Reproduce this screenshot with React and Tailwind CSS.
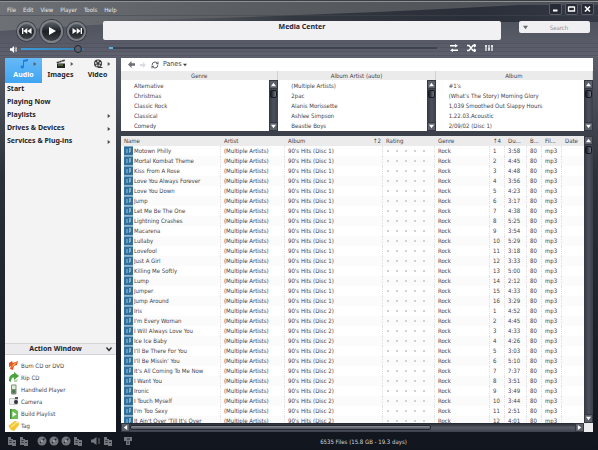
import React from 'react';
import { RefreshCw } from 'lucide-react';

const TRACKS = [
  ['Motown Philly', 1, 1, '3:58'],
  ['Mortal Kombat Theme', 1, 2, '4:45'],
  ['Kiss From A Rose', 1, 3, '4:48'],
  ['Love You Always Forever', 1, 4, '3:56'],
  ['Love You Down', 1, 5, '4:23'],
  ['Jump', 1, 6, '3:17'],
  ['Let Me Be The One', 1, 7, '4:38'],
  ['Lightning Crashes', 1, 8, '5:25'],
  ['Macarena', 1, 9, '3:54'],
  ['Lullaby', 1, 10, '5:29'],
  ['Lovefool', 1, 11, '3:18'],
  ['Just A Girl', 1, 12, '3:33'],
  ['Killing Me Softly', 1, 13, '5:00'],
  ['Lump', 1, 14, '2:12'],
  ['Jumper', 1, 15, '4:33'],
  ['Jump Around', 1, 16, '3:29'],
  ['Iris', 2, 1, '4:52'],
  ["I'm Every Woman", 2, 2, '4:45'],
  ['I Will Always Love You', 2, 3, '4:33'],
  ['Ice Ice Baby', 2, 4, '4:26'],
  ["I'll Be There For You", 2, 5, '3:03'],
  ["I'll Be Missin' You", 2, 6, '5:10'],
  ["It's All Coming To Me Now", 2, 7, '7:37'],
  ['I Want You', 2, 8, '3:51'],
  ['Ironic', 2, 9, '3:49'],
  ['I Touch Myself', 2, 10, '3:44'],
  ["I'm Too Sexy", 2, 11, '2:51'],
  ["It Ain't Over 'Till It's Over", 2, 12, '4:01'],
];

const PANES = [
  { title: 'Genre', items: ['Alternative', 'Christmas', 'Classic Rock', 'Classical', 'Comedy'] },
  { title: 'Album Artist (auto)', items: ['(Multiple Artists)', '2pac', 'Alanis Morissette', 'Ashlee Simpson', 'Beastie Boys'] },
  { title: 'Album', items: ["#1's", "(What's The Story) Morning Glory", '1,039 Smoothed Out Slappy Hours', '1.22.03.Acoustic', '2/09/02 (Disc 1)'] },
];

const RATING = [0, 1, 2, 3, 4];

function Triangle({ points, className }) {
  return (
    <svg viewBox="0 0 6 6" className={className} fill="currentColor" aria-hidden="true">
      <polygon points={points} />
    </svg>
  );
}

function ScrollButton({ points, label }) {
  return (
    <button aria-label={label} className="flex size-[9px] shrink-0 items-center justify-center border border-[#343842] bg-[#5c606b] text-white">
      <Triangle points={points} className="size-[5px]" />
    </button>
  );
}

function VerticalScrollbar() {
  return (
    <div className="flex w-[9px] shrink-0 flex-col items-center bg-linear-to-r from-[#333842] via-[#4b505c] to-[#3a3f4b]">
      <ScrollButton points="0,5 3,1 6,5" label="Scroll up" />
      <div className="mt-px h-2 w-[7px] rounded-xs border border-[#14181f] bg-linear-to-r from-[#1a1d25] to-[#757985]" />
      <div className="flex-1" />
      <ScrollButton points="0,1 3,5 6,1" label="Scroll down" />
    </div>
  );
}

function RoundButton({ label, big, children }) {
  return (
    <button
      aria-label={label}
      className={
        (big ? 'size-[23px]' : 'size-[19px]') +
        ' flex shrink-0 items-center justify-center rounded-full border-2 border-[#7d8187] bg-linear-to-b from-[#5d6269] via-[#1c2025] to-[#3e4348] text-white shadow-[0_0_0_1px_#3c4048]'
      }
    >
      {children}
    </button>
  );
}

function WindowButton({ label, children }) {
  return (
    <button aria-label={label} className="flex h-3 w-[13px] items-center justify-center rounded-xs border border-[#5a5e68] bg-[#262a34] text-white">
      <svg viewBox="0 0 9 8" className="h-2 w-[9px]" fill="none" stroke="currentColor" aria-hidden="true">
        {children}
      </svg>
    </button>
  );
}

function Header() {
  return (
    <header className="relative h-[57px] shrink-0 overflow-hidden bg-linear-to-b from-[#62676b] via-[#5d616a] to-[#5b5e6a] text-white">
      <svg viewBox="0 0 598 57" preserveAspectRatio="none" className="absolute inset-0 h-full w-full" aria-hidden="true">
        <defs>
          <linearGradient id="top" x1="0" x2="1" y1="0" y2="0">
            <stop offset="0" stopColor="#6d7176" />
            <stop offset="0.4" stopColor="#5a5e62" />
            <stop offset="1" stopColor="#4b4f55" />
          </linearGradient>
          <linearGradient id="dark" x1="0" x2="1" y1="0" y2="0">
            <stop offset="0" stopColor="#4a4e55" stopOpacity="0" />
            <stop offset="0.4" stopColor="#343840" />
            <stop offset="0.75" stopColor="#2a2e38" />
            <stop offset="1" stopColor="#343945" />
          </linearGradient>
          <linearGradient id="low" x1="0" x2="0" y1="0" y2="1">
            <stop offset="0" stopColor="#4f535c" />
            <stop offset="1" stopColor="#5e616e" />
          </linearGradient>
        </defs>
        <rect width="598" height="57" fill="url(#top)" />
        <path d="M0 31 C70 26 150 21 250 20 H598 V57 H0Z" fill="url(#low)" />
        <path d="M90 20 C240 19 380 12 520 5 H598 V22 H90Z" fill="url(#dark)" />
        <rect y="15" width="598" height="1" fill="#444850" opacity="0.5" />
        <rect width="598" height="1" fill="#3a3e42" />
        <rect y="1" width="598" height="1" fill="#8d9193" />
        <path d="M0 43.5 H598 M0 47.5 H598 M0 51.5 H598 M0 55.5 H598" stroke="#50535f" opacity="0.7" />
      </svg>
      <div className="relative flex h-full flex-col">
        <div className="flex h-[17px] shrink-0 items-center justify-between pt-px pl-[7px] pr-1">
          <nav aria-label="Menu" className="flex gap-[7px] text-[6px] text-[#e6e7e9]">
            <button>File</button>
            <button>Edit</button>
            <button>View</button>
            <button>Player</button>
            <button>Tools</button>
            <button>Help</button>
          </nav>
          <div className="flex gap-[3px]">
            <WindowButton label="Minimize"><path d="M2 5.5h4.500" strokeWidth="2" /></WindowButton>
            <WindowButton label="Maximize"><path d="M1.500 2h6M1.500 1.500v4.500h6v-4.500" strokeWidth="1.300" /></WindowButton>
            <WindowButton label="Close"><path d="M2 1.500l5 5M7 1.500l-5 5" strokeWidth="1.600" /></WindowButton>
          </div>
        </div>
        <div className="flex min-h-0 flex-1 pr-2">
          <div className="flex w-[103px] shrink-0 flex-col">
            <div className="flex h-7 items-center gap-1 pl-[17px]">
              <RoundButton label="Previous">
                <svg viewBox="0 0 12 8" className="h-2 w-3" fill="currentColor" aria-hidden="true"><path d="M1 1h1.300v6H1zM2.300 4l4-3v6zM6.300 4l4.200-3v6z" /></svg>
              </RoundButton>
              <RoundButton label="Play" big>
                <svg viewBox="0 0 10 10" className="size-[10px]" fill="currentColor" aria-hidden="true"><path d="M2 1l7 4-7 4z" /></svg>
              </RoundButton>
              <RoundButton label="Next">
                <svg viewBox="0 0 12 8" className="h-2 w-3" fill="currentColor" aria-hidden="true"><path d="M1.500 1l4.200 3-4.200 3zM5.700 1l4 3-4 3zM9.700 1H11v6H9.700z" /></svg>
              </RoundButton>
            </div>
            <div className="flex items-center gap-1 pl-[10px]">
              <svg viewBox="0 0 8 8" className="size-[7px] shrink-0" fill="currentColor" aria-hidden="true"><path d="M0 2.500h2L4.500 0v8L2 5.500H0z" /><path d="M5.500 2q1.500 2 0 4M6.700 1q2 3 0 6" fill="none" stroke="currentColor" strokeWidth="0.800" /></svg>
              <input
                type="range"
                aria-label="Volume"
                defaultValue="96"
                className="h-2 w-[63px] appearance-none bg-transparent bg-linear-to-r from-[#3f9ad6] to-[#357fb0] bg-[length:100%_2px] bg-center bg-no-repeat [&::-webkit-slider-thumb]:size-2 [&::-webkit-slider-thumb]:appearance-none [&::-webkit-slider-thumb]:rounded-full [&::-webkit-slider-thumb]:border [&::-webkit-slider-thumb]:border-[#22262d] [&::-webkit-slider-thumb]:bg-[#5a6069]"
              />
            </div>
          </div>
          <div className="flex min-w-0 flex-1 flex-col pt-1">
            <div className="h-[19px] rounded-xs bg-[#f1f1f3] pt-px text-center font-['Noto_Sans',sans-serif] text-[7px] leading-[10px] font-bold text-[#1f2433]">Media Center</div>
            <div className="flex items-center gap-[9px] pt-1 pr-2 pl-[6px]">
              <input
                type="range"
                aria-label="Position"
                defaultValue="0"
                className="mr-1 h-2 min-w-0 flex-1 appearance-none bg-transparent bg-linear-to-r from-[#3f4350] to-[#3f4350] bg-[length:100%_2px] bg-center bg-no-repeat [&::-webkit-slider-thumb]:h-[2px] [&::-webkit-slider-thumb]:w-1 [&::-webkit-slider-thumb]:appearance-none [&::-webkit-slider-thumb]:bg-[#58b4ee]"
              />
              <button aria-label="Repeat">
                <svg viewBox="0 0 8 8" className="size-2" fill="currentColor" aria-hidden="true"><path d="M0 1h5V0l3 1.700L5 3.400V2.400H0zM8 5.600H3V4.600L0 6.300 3 8V7h5z" /></svg>
              </button>
              <button aria-label="Shuffle">
                <svg viewBox="0 0 9 8" className="h-2 w-[9px]" fill="none" stroke="currentColor" strokeWidth="1.300" aria-hidden="true"><path d="M0 1.500h2l4 5h3M0 6.500h2l4-5h3M7 0l1.800 1.500L7 3M7 5l1.800 1.500L7 8" /></svg>
              </button>
              <button aria-label="Equalizer">
                <svg viewBox="0 0 8 8" className="size-2" stroke="currentColor" strokeWidth="1.200" aria-hidden="true"><path d="M1 1v6M4 1v6M7 1v6" /><path d="M0 2h2M3 5h2M6 2h2" /></svg>
              </button>
            </div>
          </div>
          <div className="w-[89px] shrink-0 pt-1 pl-[18px]">
            <div className="flex h-3 items-center rounded-xs bg-[#f0f0f2]">
              <button aria-label="Search options" className="px-1 text-[#666a70]"><Triangle points="0,1 6,1 3,5" className="size-[5px]" /></button>
              <input type="text" aria-label="Search" placeholder="Search" className="h-full min-w-0 flex-1 bg-transparent pr-1 text-center text-[6px] text-[#333] outline-none placeholder:text-[#8d8f94]" />
            </div>
          </div>
        </div>
      </div>
    </header>
  );
}

function AudioIcon() {
  return (
    <svg viewBox="0 0 10 10" className="size-[10px]" fill="#1c7fe0" aria-hidden="true">
      <path d="M4 1l5-1v2L5 3v5H4z" /><ellipse cx="3.300" cy="8" rx="1.800" ry="1.400" />
    </svg>
  );
}

function ClapperIcon() {
  return (
    <svg viewBox="0 0 10 10" className="size-[10px]" aria-hidden="true">
      <path d="M1 4.500h8v4.500H1z" fill="#23251f" /><path d="M0.500 3L8.500 0.500l0.500 1.500L1 4.500z" fill="#3c3f38" /><path d="M2.500 2.500l1.500 1M5 1.700l1.500 1" stroke="#ddd" strokeWidth="0.700" /><path d="M2 6h5" stroke="#789a5b" />
    </svg>
  );
}

function ReelIcon() {
  return (
    <svg viewBox="0 0 10 10" className="size-[10px]" aria-hidden="true">
      <circle cx="5" cy="4.500" r="4" fill="#3b3b3d" /><path d="M5 8.500h4.500" stroke="#3b3b3d" />
      <g fill="#c9c9cb"><circle cx="5" cy="2.200" r="1" /><circle cx="7.200" cy="4" r="1" /><circle cx="2.800" cy="4" r="1" /><circle cx="3.700" cy="6.600" r="1" /><circle cx="6.300" cy="6.600" r="1" /></g>
    </svg>
  );
}

const TABS = [
  { label: 'Audio', icon: <AudioIcon />, active: true },
  { label: 'Images', icon: <ClapperIcon /> },
  { label: 'Video', icon: <ReelIcon /> },
];

const TREE = [
  { label: 'Start' },
  { label: 'Playing Now' },
  { label: 'Playlists', more: true },
  { label: 'Drives & Devices', more: true },
  { label: 'Services & Plug-ins', more: true },
];

const ACTIONS = [
  {
    label: 'Burn CD or DVD',
    art: <><path d="M1 3l3-2 1 2 5-2-1 4-3 1-1 4-3-1 1-3-2 1z" fill="#e4572a" /><path d="M3 8l2-4 4-2-2 3z" fill="#f9a13a" /></>,
  },
  {
    label: 'Rip CD',
    art: <><path d="M1 9c0-5 2-7 5-7V0l5 4-5 4V5.500C4 5 3 7 3 10z" fill="#4aa53c" /><path d="M6 8l4-1-1 3H6z" fill="#bcd7b4" /></>,
  },
  {
    label: 'Handheld Player',
    art: <><rect x="3" y="0.500" width="5.500" height="10" rx="1" fill="#7d8a7d" /><rect x="4" y="1.500" width="3.500" height="3.500" fill="#d8f0d4" /><circle cx="5.700" cy="7.500" r="1.500" fill="#3c7a40" /></>,
  },
  {
    label: 'Camera',
    art: <><rect x="1" y="2" width="9" height="7" rx="1" fill="#c6c8cc" /><path d="M2 3h4v5H2z" fill="#eef0f2" /><circle cx="8" cy="6" r="2" fill="#33363c" /><path d="M7 1h3v2H7z" fill="#50545c" /></>,
  },
  {
    label: 'Build Playlist',
    art: <><path d="M2 1h5l3 2v8H2z" fill="#6cbf4e" /><path d="M4.500 3.500l4 2.700-4 2.800z" fill="#fff" /><path d="M2 1h1.500v10H2z" fill="#3f8f38" /></>,
  },
  {
    label: 'Tag',
    art: <><path d="M0.500 6l6-5 4 1 0.500 3-5 6-3-1z" fill="#f3c52e" /><path d="M3 7l5-4" stroke="#fbe68e" strokeWidth="1.500" /><circle cx="9" cy="2.500" r="0.800" fill="#fff" /></>,
  },
];

function Sidebar() {
  return (
    <aside className="flex w-[111px] shrink-0 flex-col bg-[#f3f3f4] text-[#23252b]">
      <div className="flex h-[25px] shrink-0 font-['Noto_Sans',sans-serif]">
        {TABS.map((tab) => (
          <button
            key={tab.label}
            className={
              (tab.active ? 'bg-linear-to-b from-[#66b9f6] to-[#3fa5f2] text-white' : '') +
              ' relative flex flex-1 flex-col items-center pt-px text-[7px] leading-[11px] font-bold'
            }
          >
            {tab.icon}
            <span>{tab.label}</span>
            <Triangle points="1,0 5,3 1,6" className="absolute top-1 right-[5px] size-1 text-[#55585f]" />
          </button>
        ))}
      </div>
      <nav className="flex-1 font-['Noto_Sans',sans-serif]" aria-label="Library">
        {TREE.map((item) => (
          <button key={item.label} className="flex h-[13px] w-full items-center justify-between pr-[5px] pl-[2px] text-[7px] font-bold">
            {item.label}
            {item.more && <Triangle points="1,0 5,3 1,6" className="size-1 text-[#44474e]" />}
          </button>
        ))}
      </nav>
      <button className="flex h-3 shrink-0 items-center border-y border-[#d4d4d6] bg-[#ececee] pr-1 font-['Noto_Sans',sans-serif] text-[7px] font-bold">
        <span className="flex-1 text-center">Action Window</span>
        <svg viewBox="0 0 6 6" className="size-[6px]" fill="none" stroke="currentColor" strokeWidth="1.300" aria-hidden="true"><path d="M0.500 1.500L3 4.500l2.500-3" /></svg>
      </button>
      <div className="h-[77px] shrink-0 bg-white pt-1">
        {ACTIONS.map((action) => (
          <button key={action.label} className="flex h-3 w-full items-center gap-[2px] pl-[3px] text-[6px] text-[#3f4147]">
            <svg viewBox="0 0 11 11" className="size-[11px] shrink-0" aria-hidden="true">{action.art}</svg>
            {action.label}
          </button>
        ))}
      </div>
    </aside>
  );
}

function Browser() {
  return (
    <section className="shrink-0 bg-white text-[#3f4147]">
      <div className="flex h-[13px] items-center pl-[7px] text-[7px]">
        <svg viewBox="0 0 8 8" className="size-[7px] text-[#6b6e74]" fill="currentColor" aria-hidden="true"><path d="M0 4l4-4v2.500h4v3H4V8z" /></svg>
        <svg viewBox="0 0 8 8" className="mx-[5px] size-[6px] text-[#dcdde0]" fill="currentColor" aria-hidden="true"><path d="M8 4L4 0v2.500H0v3h4V8z" /></svg>
        <RefreshCw className="mr-1 size-2 text-[#5f636b]" strokeWidth={3} />
        <button className="flex items-center gap-px">Panes<Triangle points="0,1 6,1 3,5" className="size-1" /></button>
      </div>
      <div className="grid grid-cols-3">
        {PANES.map((pane) => (
          <div key={pane.title} className="min-w-0">
            <div className="h-[9px] border-r border-[#d0d1d3] bg-[#ebebec] text-center text-[6px] leading-[9px]">{pane.title}</div>
            <div className="flex h-[51px]">
              <ul className="min-w-0 flex-1 pt-px pl-[13px] text-[6px] leading-[10px] whitespace-nowrap">
                {pane.items.map((item) => <li key={item}>{item}</li>)}
              </ul>
              <VerticalScrollbar />
            </div>
          </div>
        ))}
      </div>
    </section>
  );
}

function TrackTable() {
  const cell = 'h-[10px] p-0 pl-[3px] border-r border-dotted border-[#e2e2e4]';
  const head = 'h-[10px] p-0 pl-[3px] text-left font-normal';
  return (
    <section className="flex min-h-0 flex-1 flex-col bg-white">
      <div className="flex min-h-0 flex-1">
        <div className="min-w-0 flex-1 overflow-hidden">
          <table className="w-full table-fixed border-separate border-spacing-0 text-[6px] leading-[10px] whitespace-nowrap text-[#3f4147]">
            <colgroup>
              <col className="w-[100px]" />
              <col className="w-16" />
              <col className="w-[98px]" />
              <col className="w-[52px]" />
              <col className="w-[55px]" />
              <col className="w-[15px]" />
              <col className="w-[22px]" />
              <col className="w-[15px]" />
              <col className="w-5" />
              <col />
            </colgroup>
            <thead className="bg-[#ebebec]">
              <tr>
                <th className={head}>Name</th>
                <th className={head}>Artist</th>
                <th className={head}><span className="flex justify-between pr-[2px]"><span>Album</span><span>↑2</span></span></th>
                <th className={head}>Rating</th>
                <th className={head}>Genre</th>
                <th className={head}>↑4</th>
                <th className={head}>Du...</th>
                <th className={head}>B...</th>
                <th className={head}>Fil...</th>
                <th className={head}>Date</th>
              </tr>
            </thead>
            <tbody>
              {TRACKS.map(([name, disc, number, duration]) => (
                <tr key={name} className="even:bg-[#fbfbfb]">
                  <td className={cell}>
                    <span className="flex h-[10px] items-center gap-px">
                      <svg viewBox="0 0 9 10" className="h-[10px] w-[9px] shrink-0" aria-hidden="true">
                        <rect width="9" height="9.500" fill="#2f6f9a" />
                        <path d="M0 0h9v1H0z" fill="#79a9c6" />
                        <path d="M2 3h2v4H2z" fill="#5f9dc2" />
                        <path d="M6 2v4M5 6h1" stroke="#b9d6e6" strokeWidth="1.200" />
                      </svg>
                      {name}
                    </span>
                  </td>
                  <td className={cell}>(Multiple Artists)</td>
                  <td className={cell}>90's Hits (Disc {disc})</td>
                  <td className={cell}>
                    <span className="flex gap-[7px] pl-px">
                      {RATING.map((star) => <i key={star} className="size-[2px] rounded-full bg-[#c3c4c7]" />)}
                    </span>
                  </td>
                  <td className={cell}>Rock</td>
                  <td className={cell}>{number}</td>
                  <td className={cell}>{duration}</td>
                  <td className={cell}>80</td>
                  <td className={cell}>mp3</td>
                  <td className="p-0" />
                </tr>
              ))}
            </tbody>
          </table>
        </div>
        <VerticalScrollbar />
      </div>
      <div className="flex h-[9px] shrink-0 bg-linear-to-b from-[#22262e] via-[#555a66] to-[#3c414d]">
        <ScrollButton points="5,0 1,3 5,6" label="Scroll left" />
        <div className="h-[5px] w-[301px] self-center rounded-xs border border-[#22262e] bg-linear-to-b from-[#8b8e96] to-[#4e525c]" />
        <div className="flex-1" />
        <ScrollButton points="1,0 5,3 1,6" label="Scroll right" />
        <div className="w-[9px] bg-[#ececee]" />
      </div>
    </section>
  );
}

const DOC = <><path d="M1 1h3v2h2v1h3v6H5V9H1z" /><path d="M2.500 4.500h2M2.500 6.500h2M6 6.500h2" stroke="#20242c" strokeWidth="0.800" /></>;
const DISC = <><circle cx="5" cy="5" r="4.500" /><path d="M5 5L7.500 2.500M3 7l1-1" fill="none" stroke="#20242c" strokeWidth="1.200" /><circle cx="5" cy="5" r="1" fill="#b0b3b8" /></>;

function StatusBar() {
  return (
    <footer className="flex h-[18px] shrink-0 items-center pl-[7px] text-[#73777d]">
      {[DOC, DOC, null, DISC, DISC, DISC, DOC, null].map((art, i) =>
        art ? (
          <button key={i} aria-label={'Tool ' + (i + 1)} className="mr-[2px]">
            <svg viewBox="0 0 10 10" className="size-[10px]" fill="currentColor" aria-hidden="true">{art}</svg>
          </button>
        ) : (
          <span key={i} className="w-[6px]" />
        )
      )}
      <button aria-label="Mute" className="mr-[2px]">
        <svg viewBox="0 0 10 10" className="size-[10px]" fill="currentColor" aria-hidden="true"><path d="M0 3.500h2L5.500 1v8L2 6.500H0z" /><path d="M8 2v6" stroke="currentColor" /></svg>
      </button>
      <button aria-label="Export">
        <svg viewBox="0 0 10 10" className="size-[10px]" fill="currentColor" aria-hidden="true">{DOC}</svg>
      </button>
      <button aria-label="Display" className="ml-[10px]">
        <svg viewBox="0 0 10 10" className="size-[10px]" fill="currentColor" aria-hidden="true"><path d="M1 1h8v4H7v4H3V5H1z" /><path d="M4 3h3M5 5v3" stroke="#20242c" /></svg>
      </button>
      <span className="flex-1 pr-1 text-center text-[6px] text-[#d3d5d9]">6535 Files (15.8 GB - 19.3 days)</span>
    </footer>
  );
}

export default function App() {
  return (
    <div className="flex h-screen flex-col overflow-hidden bg-[#11151d] font-['DejaVu_Sans_Condensed','Noto_Sans',sans-serif]">
      <Header />
      <div className="flex min-h-0 flex-1 flex-col bg-linear-to-b from-[#5b5e6a] via-[#2c3139] via-30% to-[#11151d]">
        <main className="flex min-h-0 flex-1 gap-[5px] px-[5px] pt-px">
          <Sidebar />
          <div className="flex min-w-0 flex-1 flex-col gap-[5px]">
            <Browser />
            <TrackTable />
          </div>
        </main>
        <StatusBar />
      </div>
    </div>
  );
}
